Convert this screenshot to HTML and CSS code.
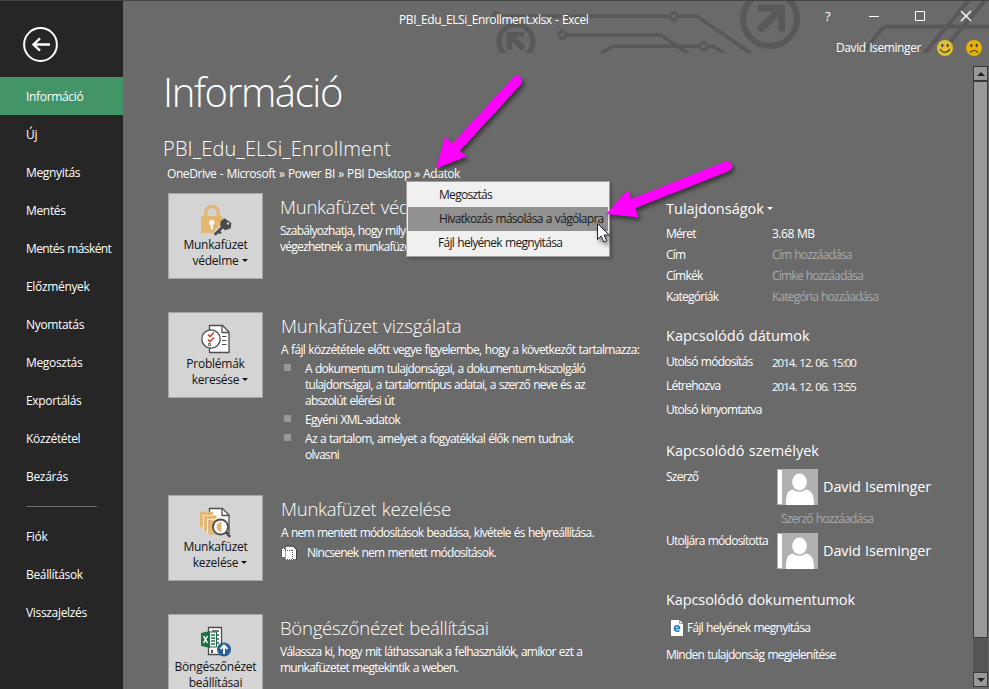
FILE: index.html
```html
<!DOCTYPE html>
<html lang="hu">
<head>
<meta charset="utf-8">
<title>PBI_Edu_ELSi_Enrollment.xlsx - Excel</title>
<link rel="stylesheet" href="styles.css">
</head>
<body>
<div class="app">
  <nav class="sidebar">
    <svg class="back" width="36" height="36" viewBox="-.5 -.5 36 36"><circle cx="18" cy="18" r="16.4" fill="none" stroke="#fff" stroke-width="2"/><path d="M27.500 18H11M17.500 11.800L11 18l6.500 6.200" fill="none" stroke="#fff" stroke-width="2.400"/></svg>
    <a class="item active">Információ</a>
    <a class="item">Új</a>
    <a class="item">Megnyitás</a>
    <a class="item">Mentés</a>
    <a class="item tight">Mentés másként</a>
    <a class="item">Előzmények</a>
    <a class="item">Nyomtatás</a>
    <a class="item">Megosztás</a>
    <a class="item">Exportálás</a>
    <a class="item">Közzététel</a>
    <a class="item">Bezárás</a>
    <hr class="rule">
    <a class="item">Fiók</a>
    <a class="item">Beállítások</a>
    <a class="item">Visszajelzés</a>
  </nav>

  <main class="main">
    <header class="header">
      <svg class="art" width="866" height="53" viewBox="123 0 866 53" fill="none" stroke="#595959" stroke-width="3.600">
        <circle cx="516" cy="41.500" r="17" stroke-width="5"/>
        <path d="M506.500 32h17.500v5h-8l9.500 9.500-4.200 4.200-9.300-9.300v8h-5.500z" fill="#595959" stroke="none"/>
        <circle cx="496.500" cy="16.500" r="3.500" stroke-width="3"/>
        <path d="M501 16.300H669M679 16.300H697L752 54"/>
        <circle cx="674" cy="16.300" r="3.600" stroke-width="3"/>
        <circle cx="562.300" cy="34.800" r="3.600" stroke-width="3"/>
        <path d="M567 35H661L689 54M599 54.500L612 46.300H698M708 46.300C715 46 719 49 724 54"/>
        <circle cx="703.300" cy="46.200" r="3.600" stroke-width="3"/>
        <circle cx="770" cy="19" r="27" stroke-width="6"/>
        <path d="M758 4.700h27v26.600h-6.500V16.500L761.500 33l-5-5L773 11.500H758z" fill="#595959" stroke="none"/>
        <path d="M862 54L882 29Q884 26.700 887 26.700H989M969 0L924 54M985.500 0L940 54" stroke-width="4"/>
      </svg>
      <div class="titlebar">
        <span class="doc">PBI_Edu_ELSi_Enrollment.xlsx - Excel</span>
        <span class="help">?</span>
        <svg width="12" height="12" viewBox="0 0 12 12"><path d="M1 6.500h10" stroke="#fff"/></svg>
        <svg width="12" height="12" viewBox="0 0 12 12"><path d="M1.500 1.500h9v9h-9z" fill="none" stroke="#fff"/></svg>
        <svg width="12" height="12" viewBox="0 0 12 12"><path d="M1 1l10 10M11 1L1 11" stroke="#fff" stroke-width="1.300"/></svg>
      </div>
      <div class="account">
        <span>David Iseminger</span>
        <svg width="16" height="16" viewBox="0 0 16 16"><circle cx="8" cy="8" r="8" fill="#e3c02f"/><ellipse cx="5.400" cy="5.500" rx="1" ry="1.700" fill="#333"/><ellipse cx="10.600" cy="5.500" rx="1" ry="1.700" fill="#333"/><path d="M3.200 8.800c1.500 4.500 8 4.500 9.600 0" fill="none" stroke="#333" stroke-width="1.100"/></svg>
        <svg width="16" height="16" viewBox="0 0 16 16"><circle cx="8" cy="8" r="8" fill="#e5b102"/><ellipse cx="5.400" cy="5.500" rx="1" ry="1.700" fill="#333"/><ellipse cx="10.600" cy="5.500" rx="1" ry="1.700" fill="#333"/><path d="M4 12.800c1.500-3 6.500-3 8 0" fill="none" stroke="#333" stroke-width="1.100"/></svg>
      </div>
    </header>

    <div class="body">
      <div class="info">
        <h1>Információ</h1>
        <h2>PBI_Edu_ELSi_Enrollment</h2>
        <p class="crumbs">OneDrive - Microsoft » Power BI » PBI Desktop » Adatok</p>

        <section class="block">
          <div class="tile">
            <svg width="34" height="34" viewBox="0 -1 34 34"><path d="M5.800 13V8.500a6.200 6.200 0 0 1 12.400 0V13" fill="none" stroke="#e3b771" stroke-width="3.200"/><rect x="1" y="12" width="21.500" height="17" rx="1.500" fill="#e3b771"/><circle cx="11.800" cy="18.500" r="2.700" fill="#f7f3ea"/><path d="M10.600 19h2.400v6.500h-2.400z" fill="#f7f3ea"/><path d="M22 23l-7.500 7.800M19.800 26.500l2.600 2.400" stroke="#d4d4d4" stroke-width="5.500"/><path d="M24.500 14.200l6.800 4.800-.6 5.200-5.700 2-4.800-4.500.5-4.500z" fill="#4a4a4a"/><path d="M23 22.500l-8.300 8.300M18.500 27l2.300 2.400" stroke="#4a4a4a" stroke-width="2.800"/><circle cx="28" cy="19.500" r="1.200" fill="#d4d4d4"/></svg>
            <span class="label">Munkafüzet<br><span class="drop">védelme</span></span>
          </div>
          <div class="text">
            <h3>Munkafüzet védelme</h3>
            <p>Szabályozhatja, hogy milyen</p>
            <p>végezhetnek a munkafüzetben</p>
          </div>
        </section>

        <section class="block b2">
          <div class="tile">
            <svg width="34" height="34" viewBox="0 0 34 34"><path d="M9.500 3.500h13l6.500 6.500v20.500H9.500z" fill="#fff" stroke="#4d4d4d" stroke-width="1.300"/><path d="M22 3.500v7h7" fill="none" stroke="#4d4d4d" stroke-width="1.300"/><path d="M22 14.500h4.500M22 18.500h4.500M22 22.500h4.500" stroke="#4d4d4d"/><circle cx="11" cy="17" r="9.200" fill="#fff" stroke="#4d4d4d" stroke-width="1.300"/><path d="M8 12.500l2 2 4-4M8 17.500l2 2 4-4" fill="none" stroke="#d04526" stroke-width="1.600"/><path d="M8.500 21.500h2v2h-2z" fill="none" stroke="#555" stroke-width=".9"/></svg>
            <span class="label">Problémák<br><span class="drop">keresése</span></span>
          </div>
          <div class="text">
            <h3 class="wide">Munkafüzet vizsgálata</h3>
            <p class="lead">A fájl közzététele előtt vegye figyelembe, hogy a következőt tartalmazza:</p>
            <ul>
              <li>A dokumentum tulajdonságai, a dokumentum-kiszolgáló<br>tulajdonságai, a tartalomtípus adatai, a szerző neve és az<br>abszolút elérési út</li>
              <li class="lead">Egyéni XML-adatok</li>
              <li class="loose">Az a tartalom, amelyet a fogyatékkal élők nem tudnak<br>olvasni</li>
            </ul>
          </div>
        </section>

        <section class="block b3">
          <div class="tile">
            <svg width="34" height="34" viewBox="0 0 34 34"><path d="M9.500 3.500h13l6.500 6.500v18H9.500z" fill="#fff" stroke="#4d4d4d" stroke-width="1.300"/><path d="M22 3.500v7h7" fill="none" stroke="#4d4d4d" stroke-width="1.300"/><path d="M1.500 22V8.300H13" fill="none" stroke="#e3b771" stroke-width="3"/><path d="M3.500 26V10.500h12" fill="none" stroke="#f3ead8" stroke-width="1.200"/><path d="M5.500 26V12.300h11" fill="none" stroke="#e3b771" stroke-width="3"/><path d="M7.500 29V14.500h14.500" fill="none" stroke="#f3ead8" stroke-width="1.200"/><path d="M8.200 15.200h13.300v14.300H8.200z" fill="#e3b771"/><circle cx="20.500" cy="22" r="7.500" fill="#fff" stroke="#4d4d4d" stroke-width="1.800"/><path d="M21.500 17a5 5 0 1 0 0 10z" fill="#e3b771"/><path d="M25.800 27.300l4.400 4.600" stroke="#4d4d4d" stroke-width="2.600"/></svg>
            <span class="label">Munkafüzet<br><span class="drop">kezelése</span></span>
          </div>
          <div class="text">
            <h3>Munkafüzet kezelése</h3>
            <p>A nem mentett módosítások beadása, kivétele és helyreállítása.</p>
            <p class="versions"><svg width="16" height="16" viewBox="0 0 16 16"><path d="M5 1.500h7l3 3V14H5z" fill="#fff"/><path d="M5 1h7l3.500 3.500V14" fill="none" stroke="#3c3c3c"/><path d="M1 3h3v9H1zM4 5h8v10H4z" fill="#fff"/><path d="M1 3.500h4M.500 3v9M4.500 4.500V14M4 5.500h8M11.500 5v9M4 14.500h8" fill="none" stroke="#555" stroke-dasharray="1 1"/></svg>Nincsenek nem mentett módosítások.</p>
          </div>
        </section>

        <section class="block b4">
          <div class="tile">
            <svg width="34" height="34" viewBox="0 0 34 34"><path d="M8.500 3.500h13v27h-13z" fill="#fff" stroke="#4d4d4d" stroke-width="1.300"/><path d="M12 7h7M12 11h7M12 15h7M12 19h7" stroke="#4d4d4d" stroke-width="1.500"/><path d="M11 26h2v3h-2z" fill="#4d4d4d"/><path d="M9 8h7.500v15H9z" fill="#fff" stroke="#1e7145"/><path d="M11 11h4M11 14h4M11 17h4M11 20h4" stroke="#1e7145" stroke-width="1.500"/><path d="M1 9l9-2v17l-9-2z" fill="#1e7145"/><path d="M3.500 12l4 7M7.500 12l-4 7" stroke="#fff" stroke-width="1.500"/><circle cx="24" cy="25.500" r="7" fill="#2a6099"/><path d="M24 30v-8M20.500 25l3.500-3.500 3.500 3.500" fill="none" stroke="#fff" stroke-width="2"/></svg>
            <span class="label">Böngészőnézet<br>beállításai</span>
          </div>
          <div class="text">
            <h3>Böngészőnézet beállításai</h3>
            <p>Válassza ki, hogy mit láthassanak a felhasználók, amikor ezt a</p>
            <p>munkafüzetet megtekintik a weben.</p>
          </div>
        </section>
      </div>

      <aside class="props">
        <h4 class="drop">Tulajdonságok</h4>
        <dl class="meta">
          <dt>Méret</dt><dd class="size">3.68 MB</dd>
          <dt>Cím</dt><dd class="hint">Cím hozzáadása</dd>
          <dt>Címkék</dt><dd class="hint">Címke hozzáadása</dd>
          <dt>Kategóriák</dt><dd class="hint">Kategória hozzáadása</dd>
        </dl>
        <h4>Kapcsolódó dátumok</h4>
        <dl class="dates">
          <dt>Utolsó módosítás</dt><dd>2014. 12. 06. 15:00</dd>
          <dt>Létrehozva</dt><dd>2014. 12. 06. 13:55</dd>
          <dt>Utolsó kinyomtatva</dt><dd></dd>
        </dl>
        <h4>Kapcsolódó személyek</h4>
        <dl class="people">
          <dt>Szerző</dt>
          <dd><span class="person"><svg width="41" height="36" viewBox="0 0 41 36"><path d="M0 0h41v36H0z" fill="#b1b1b1"/><path d="M1 1h4v34H1z" fill="#fff"/><path d="M9 36c0-11 1-14 7-15.500 4 3 9 3 13 0 6 1.500 8 4.500 8 15.500z" fill="#fff"/><ellipse cx="22.500" cy="13" rx="7.300" ry="8.500" fill="#fff"/></svg>David Iseminger</span><span class="hint add">Szerző hozzáadása</span></dd>
          <dt>Utoljára módosította</dt>
          <dd><span class="person"><svg width="41" height="36" viewBox="0 0 41 36"><path d="M0 0h41v36H0z" fill="#b1b1b1"/><path d="M1 1h4v34H1z" fill="#fff"/><path d="M9 36c0-11 1-14 7-15.500 4 3 9 3 13 0 6 1.500 8 4.500 8 15.500z" fill="#fff"/><ellipse cx="22.500" cy="13" rx="7.300" ry="8.500" fill="#fff"/></svg>David Iseminger</span></dd>
        </dl>
        <h4 class="snug">Kapcsolódó dokumentumok</h4>
        <p class="open"><svg width="12" height="16" viewBox="0 0 12 16"><path d="M0 0h8.500L12 3.500V16H0z" fill="#fff"/><path d="M8.500 0v3.500H12" fill="none" stroke="#888" stroke-width=".8"/><path d="M3.500 8.500h5c0-4-5-3.500-5 0 0 3 3 3.200 5 2" fill="none" stroke="#1979ca" stroke-width="1.600"/></svg>Fájl helyének megnyitása</p>
        <p class="all">Minden tulajdonság megjelenítése</p>
      </aside>

      <div class="scroll">
        <span class="arrow up"></span>
        <span class="thumb"></span>
        <span class="track"></span>
        <span class="arrow down"></span>
      </div>
    </div>
  </main>

  <div class="menu">
    <span>Megosztás</span>
    <span class="hover">Hivatkozás másolása a vágólapra</span>
    <span class="third">Fájl helyének megnyitása</span>
  </div>
  <svg class="overlay" width="989" height="689" viewBox="0 0 989 689">
    <g class="pointer" fill="#f0f" stroke="none">
      <path d="M513.500 77.200A5 5 0 0 1 520.500 84.700L460 150.500L466.700 156.500L436 168.500L445 137L452.500 143.500Z"/>
      <path d="M725.500 161.500A5 5 0 0 1 729 171L635.500 208L638.500 217.500L606 214L627.700 190L631.500 199Z"/>
    </g>
    <path class="pointer" d="M597.500 223.500v16l3.700-3.500 2.600 6 2.800-1.200-2.600-5.800h5z" fill="#fff" stroke="#223"/>
  </svg>
</div>
</body>
</html>
```
FILE: styles.css
```css
* { box-sizing: border-box; margin: 0; padding: 0; }

body {
  width: 989px;
  height: 689px;
  overflow: hidden;
  background: #6a6a6a;
  color: #fff;
  font: 12px/16px "Open Sans", "Noto Sans", sans-serif;
  letter-spacing: -.74px;
  word-spacing: .7px;
  white-space: nowrap;
}

svg { display: block; flex: none; }

.app {
  position: relative;
  display: flex;
  height: 689px;
  overflow: hidden;
  border-top: 1px solid #444;
}

/* navigation */
.sidebar {
  width: 123px;
  flex: none;
  background: #262626;
  letter-spacing: -.33px;
}
.back { margin: 25px 0 15px 22px; }
.item {
  display: block;
  height: 38px;
  padding-left: 26px;
  line-height: 39px;
}
.item.active { background: #439467; }
.item.tight { letter-spacing: -.6px; }
.rule {
  width: 71px;
  height: 1px;
  margin: 11px 0 10px 26px;
  border: 0;
  background: #6b6b6b;
}

/* header */
.main { flex: 1; display: flex; flex-direction: column; min-width: 0; }
.header { position: relative; height: 65px; flex: none; }
.art { position: absolute; left: 0; top: -1px; }
.titlebar {
  position: relative;
  display: flex;
  align-items: center;
  height: 30px;
  padding-left: 276px;
}
.titlebar svg { margin-right: 34px; }
.doc { width: 426px; margin-top: 8px; letter-spacing: -.41px; }
.help { width: 43px; font-size: 13px; }
.titlebar svg:last-child { margin-right: 0; }
.account {
  position: relative;
  display: flex;
  align-items: center;
  height: 34px;
  padding-left: 713px;
  letter-spacing: -.4px;
}
.account span { width: 101px; }
.account svg + svg { margin-left: 13px; }

/* content */
.body { flex: 1; display: flex; min-height: 0; }
.info { width: 543px; padding-left: 40px; flex: none; }
h1 {
  font-size: 40px;
  font-weight: 300;
  line-height: 48px;
  letter-spacing: -1.37px;
  margin-top: 2px;
}
h2 {
  font-size: 20px;
  font-weight: 300;
  line-height: 28px;
  letter-spacing: .18px;
  margin-top: 19px;
}
.crumbs { margin: 3px 0 0 4px; letter-spacing: -.43px; }

.block { display: flex; height: 119px; margin-left: 5px; }
.crumbs + .block { margin-top: 11px; }
.b2 { height: 183px; }
.tile {
  display: flex;
  flex-direction: column;
  align-items: center;
  width: 95px;
  height: 86px;
  flex: none;
  padding-top: 9px;
  border: 1px solid #a5a5a5;
  background: #d4d4d4;
  color: #111;
}
.tile svg { margin-left: 3px; }
.b4 .tile svg { margin-bottom: 1px; }
.label { text-align: center; letter-spacing: -.24px; }
.drop::after {
  content: "";
  display: inline-block;
  margin-left: 3px;
  vertical-align: 3px;
  border: 3px solid transparent;
  border-top-color: currentColor;
  border-bottom: 0;
}
.label .drop { padding-left: 9px; }
.text { padding-left: 17px; }
.b2 .text, .b3 .text { padding-left: 18px; }
h3 {
  font-size: 18.5px;
  font-weight: 300;
  line-height: 28px;
  letter-spacing: -.24px;
  margin-bottom: 2px;
}
h3.wide { letter-spacing: -.1px; }
.lead { letter-spacing: -.67px; }
.loose { letter-spacing: -.7px; }
ul { list-style: none; margin-top: 3px; }
li { position: relative; padding-left: 24px; margin-bottom: 3px; }
li::before {
  content: "";
  position: absolute;
  left: 3px;
  top: 3px;
  width: 7px;
  height: 7px;
  background: #979797;
}
.versions { display: flex; gap: 10px; margin-top: 4px; }

/* properties */
.props { width: 307px; flex: none; padding-top: 133px; }
h4 {
  font-size: 14.5px;
  font-weight: 400;
  line-height: 20px;
  letter-spacing: 0;
}
h4.drop::after { vertical-align: 4px; }
h4.snug { letter-spacing: -.1px; }
dl { display: grid; grid-template-columns: 106px 1fr; }
.meta { grid-auto-rows: 21px; margin: 7px 0 16px; }
.size { letter-spacing: -.5px; }
.hint { color: #a9a9a9; letter-spacing: -.82px; }
.dates { grid-auto-rows: 24px; margin: 8px 0 15px; }
.dates dd { font-size: 11.5px; letter-spacing: -.97px; word-spacing: .8px; padding-top: 1px; }
.people { margin: 8px 0 21px; grid-template-columns: 111px 1fr; grid-template-rows: 64px 36px; }
.person {
  display: flex;
  align-items: center;
  gap: 5px;
  height: 36px;
  font-size: 14.5px;
  letter-spacing: -.12px;
}
.people dt { line-height: 15px; }
.add { display: block; margin: 6px 0 0 4px; }
.open { display: flex; gap: 4px; margin: 10px 0 11px 5px; }

/* scrollbar */
.scroll {
  display: flex;
  flex-direction: column;
  width: 15px;
  height: 621px;
  background: #555;
}
.arrow, .thumb { border: 1px solid #3a3a3a; background: #999; }
.arrow { display: flex; align-items: center; justify-content: center; height: 15px; flex: none; }
.arrow::after { content: ""; border: 4px solid transparent; }
.up::after { border-bottom-color: #222; border-top: 0; }
.down::after { border-top-color: #222; border-bottom: 0; }
.thumb { height: 557px; }
.track { flex: 1; }

/* overlays */
.menu {
  position: absolute;
  left: 406px;
  top: 180px;
  width: 204px;
  height: 76px;
  padding: 1px;
  border: 1px solid #a0a0a0;
  background: #f0f0f0;
  color: #1a1a1a;
  box-shadow: 2px 2px 3px rgba(0, 0, 0, .25);
}
.menu span { display: block; height: 24px; padding-left: 31px; line-height: 24px; letter-spacing: -.7px; }
.menu .hover { background: #919191; }
.menu .third { padding-left: 30px; }
.overlay { position: absolute; left: 0; top: -1px; pointer-events: none; }
.pointer { filter: drop-shadow(2px 3px 2px rgba(0, 0, 0, .5)); }
```
